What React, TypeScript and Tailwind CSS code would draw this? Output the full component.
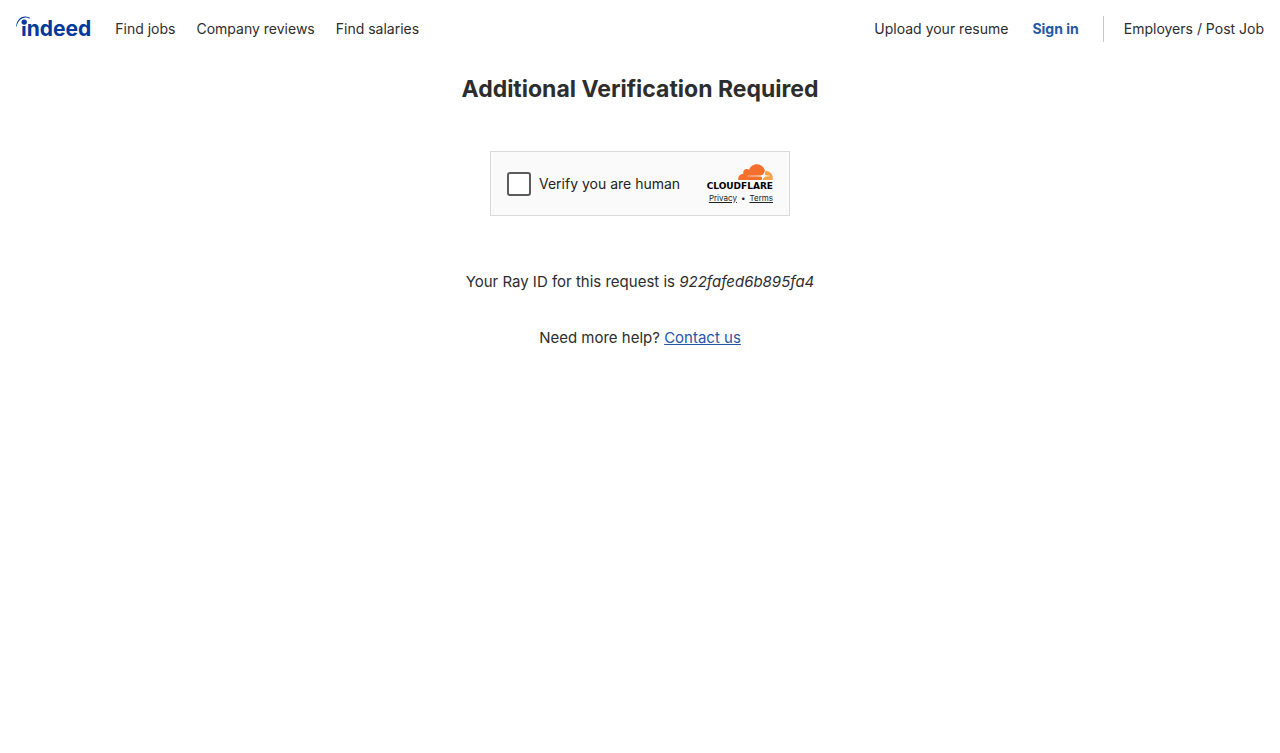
import React from "react";

function IndeedLogo() {
  return (
    <span className="relative block pl-[5px] text-[21px] leading-[26px] font-bold text-[#003a9b]">
      indeed
      <svg viewBox="0 0 20 14" className="absolute top-0 left-0 h-3.5 w-5" aria-hidden="true">
        <path d="M5 0h7v10H5z" fill="#ffffff" />
        <circle cx="8.2" cy="6.1" r="2.7" fill="#003a9b" />
        <path d="M0.2 10.4C0.6 3.6 6-1.8 13.4 1.6c.9.5.7 1.2-.2.8C7.2-.2 2 4 .8 10.2c-.1.5-.6.6-.6.2Z" fill="#003a9b" />
      </svg>
    </span>
  );
}

function CloudflareCloud() {
  return (
    <svg viewBox="0 6.4 24 11.1" className="h-4 w-[35px]" aria-hidden="true">
      <path
        fill="#f4702c"
        d="M16.5088 16.8447c.1475-.5068.0908-.9707-.1553-1.3154-.2246-.3164-.6045-.499-1.0615-.5205l-8.6592-.1123a.1559.1559 0 0 1-.1333-.0713c-.0283-.042-.0351-.0986-.021-.1553.0278-.084.1123-.1484.2036-.1562l8.7359-.1123c1.0351-.0489 2.1601-.8868 2.5537-1.9136l.499-1.3013c.0215-.0561.0293-.1128.0147-.168-.5625-2.5463-2.835-4.4453-5.5499-4.4453-2.5039 0-4.6284 1.6177-5.3876 3.8614-.4927-.3658-1.1187-.5625-1.794-.499-1.2026.119-2.1665 1.083-2.2861 2.2856-.0283.31-.0069.6128.0635.894C1.5683 13.171 0 14.7754 0 16.752c0 .1748.0142.3515.0352.5273.0141.083.0844.1475.1689.1475h15.9814c.0909 0 .1758-.0645.2032-.1553l.12-.4268z"
      />
      <path
        fill="#f9a14a"
        d="M19.2656 11.2813c-.0771 0-.1611 0-.2383.0112-.0566 0-.1054.0415-.127.0976l-.3378 1.1744c-.1475.5068-.0918.9707.1543 1.3164.2256.3164.6055.498 1.0625.5195l1.8437.1133c.0557 0 .1055.0263.1329.0703.0283.043.0351.1074.0214.1562-.0283.084-.1132.1485-.204.1553l-1.921.1123c-1.041.0488-2.1582.8867-2.5527 1.914l-.1406.3585c-.0283.0713.0215.1416.0986.1416h6.5977c.0771 0 .1474-.0489.169-.126.1122-.4082.1757-.837.1757-1.2803 0-2.6025-2.125-4.727-4.7344-4.727"
      />
    </svg>
  );
}

function VerificationBox() {
  return (
    <div className="mt-[46px] flex h-[65px] w-[300px] items-center justify-between border border-[#dadada] bg-[#fafafa] px-4 text-[#232323]">
      <label className="flex items-center gap-2 text-sm">
        <input type="checkbox" className="size-6 appearance-none rounded-[3px] border-2 border-[#5c5c5c] bg-white" />
        Verify you are human
      </label>
      <div className="flex flex-col items-end">
        <CloudflareCloud />
        <span className="font-['DejaVu_Sans',sans-serif] text-[9px] leading-3 font-bold text-black">CLOUDFLARE</span>
        <div className="flex gap-1 text-[8px] leading-3">
          <a href="#privacy" className="underline">Privacy</a>
          <span>•</span>
          <a href="#terms" className="underline">Terms</a>
        </div>
      </div>
    </div>
  );
}

export default function App() {
  return (
    <div className="min-h-screen bg-white font-['Inter',sans-serif] text-[#2d2d2d]">
      <header className="flex items-start justify-between px-4 pt-4 text-sm leading-[26px]">
        <nav className="flex gap-[21px]" aria-label="Main">
          <a href="#home" className="pr-[3px]"><IndeedLogo /></a>
          <a href="#jobs">Find jobs</a>
          <a href="#reviews">Company reviews</a>
          <a href="#salaries">Find salaries</a>
        </nav>
        <nav className="flex gap-6" aria-label="Account">
          <a href="#resume">Upload your resume</a>
          <a href="#signin" className="font-bold text-[#2557a7]">Sign in</a>
          <a href="#employers" className="border-l border-[#c8c8c8] pl-5">Employers / Post Job</a>
        </nav>
      </header>
      <main className="flex flex-col items-center px-4 pt-[31px] pb-8">
        <h1 className="text-[23px] leading-8 font-bold">Additional Verification Required</h1>
        <VerificationBox />
        <p className="mt-[54px] text-[15px] leading-6">
          Your Ray ID for this request is <em>922fafed6b895fa4</em>
        </p>
        <p className="mt-8 text-[15px] leading-6">
          Need more help? <a href="#contact" className="text-[#2557a7] underline">Contact us</a>
        </p>
      </main>
    </div>
  );
}
